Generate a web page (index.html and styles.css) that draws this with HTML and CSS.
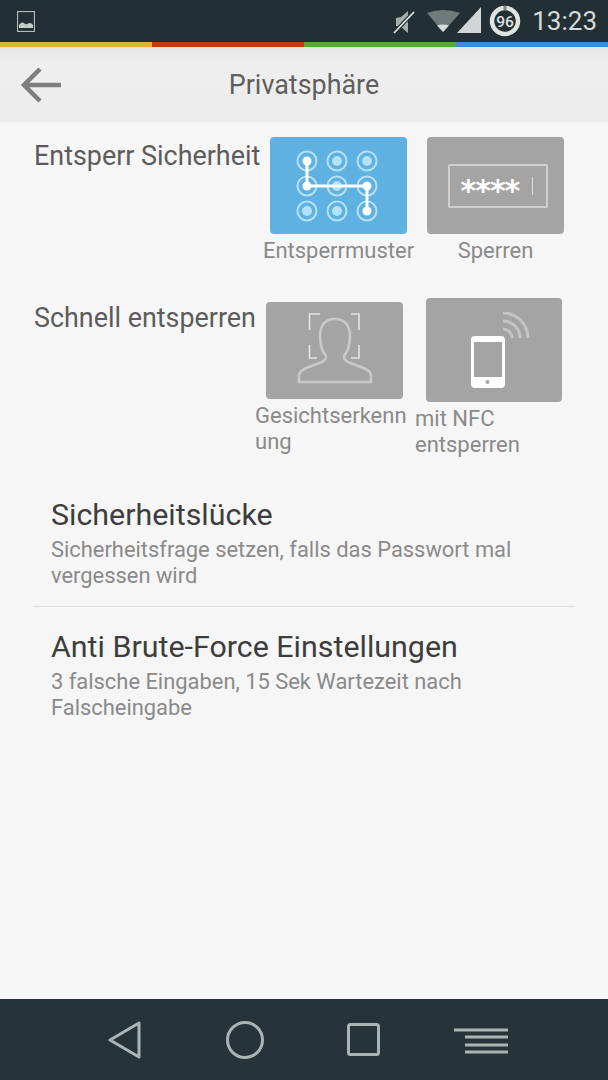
FILE: index.html
```html
<!DOCTYPE html>
<html lang="de">
<head>
    <meta charset="UTF-8">
    <meta name="viewport" content="width=device-width, initial-scale=1.0">
    <title>Privatsphäre</title>
    <link rel="stylesheet" href="styles.css">
</head>
<body>
<div class="phone">

    <div class="status-bar">
        <svg class="pic-icon" width="18" height="21" viewBox="0 0 18 21">
            <rect x="0.500" y="0.500" width="17" height="20" fill="none" stroke="#b3bcbb" stroke-width="1.200"/>
            <path d="M2 17 L2 14 Q5 10 7.500 12.500 Q9 14 11 12.500 Q14 11 16 14 L16 17 Z" fill="#c3cbca"/>
        </svg>
        <div class="status-right">
            <svg class="mute-icon" width="22" height="30" viewBox="0 0 22 30">
                <path d="M3 12 L8 11 L15 5 L15 27 L8 21 L3 20 Z" fill="#a3aead"/>
                <path d="M1 27 L21 6" stroke="#222f35" stroke-width="4"/>
                <path d="M1 27 L21 6" stroke="#e0e4e3" stroke-width="1.800"/>
            </svg>
            <svg class="signal-icon" width="54" height="30" viewBox="0 0 54 30">
                <path d="M0 7 Q16 1 33 7 L16 26 Z" fill="#6f7b7a"/>
                <path d="M10 19.500 Q16 17.500 22 19.500 L16 26 Z" fill="#d5dbda"/>
                <path d="M54 1 L54 27 L30 27 Z" fill="#d0d6d5"/>
            </svg>
            <svg class="battery-icon" width="32" height="32" viewBox="0 0 32 32">
                <circle cx="16" cy="16" r="13" fill="none" stroke="#dfe3e2" stroke-width="4.500"/>
                <path d="M14.500 1 L17.500 1 L17.500 5 L14.500 5 Z" fill="#7d8887"/>
                <text x="16" y="21.500" text-anchor="middle" class="battery-text">96</text>
            </svg>
            <span class="clock">13:23</span>
        </div>
    </div>

    <div class="stripe">
        <div class="stripe-yellow"></div>
        <div class="stripe-red"></div>
        <div class="stripe-green"></div>
        <div class="stripe-blue"></div>
    </div>

    <div class="toolbar">
        <svg class="back-icon" width="40" height="36" viewBox="0 0 40 36">
            <path d="M19 2 L3 18 L19 34 M3 18 L40 18" fill="none" stroke="#7f7f7f" stroke-width="4.500"/>
        </svg>
        <span class="toolbar-title">Privatsphäre</span>
    </div>

    <div class="content">

        <div class="tile-row row-one">
            <div class="row-label">Entsperr Sicherheit</div>
            <div class="tile-col col-pattern">
                <div class="tile tile-blue">
                    <svg width="90" height="74" viewBox="0 0 90 74">
                        <g fill="none" stroke="#b5e1f9" stroke-width="2">
                            <circle cx="13" cy="12" r="9.500"/>
                            <circle cx="43" cy="12" r="9.500"/>
                            <circle cx="73" cy="12" r="9.500"/>
                            <circle cx="13" cy="37" r="9.500"/>
                            <circle cx="43" cy="37" r="9.500"/>
                            <circle cx="73" cy="37" r="9.500"/>
                            <circle cx="13" cy="62" r="9.500"/>
                            <circle cx="43" cy="62" r="9.500"/>
                            <circle cx="73" cy="62" r="9.500"/>
                        </g>
                        <g fill="#b5e1f9">
                            <circle cx="43" cy="12" r="5"/>
                            <circle cx="73" cy="12" r="5"/>
                            <circle cx="43" cy="37" r="5"/>
                            <circle cx="13" cy="62" r="5"/>
                            <circle cx="43" cy="62" r="5"/>
                        </g>
                        <path d="M13 12 L13 37 L73 37 L73 62" fill="none" stroke="#fff" stroke-width="3"/>
                        <g fill="#fff">
                            <circle cx="13" cy="12" r="4.500"/>
                            <circle cx="13" cy="37" r="4.500"/>
                            <circle cx="73" cy="37" r="4.500"/>
                            <circle cx="73" cy="62" r="4.500"/>
                        </g>
                    </svg>
                </div>
                <div class="tile-caption">Entsperrmuster</div>
            </div>
            <div class="tile-col col-lock">
                <div class="tile">
                    <div class="pin-box">
                        <span class="pin-stars">****</span>
                        <span class="pin-cursor"></span>
                    </div>
                </div>
                <div class="tile-caption">Sperren</div>
            </div>
        </div>

        <div class="tile-row row-two">
            <div class="row-label label-short">Schnell entsperren</div>
            <div class="tile-col col-face">
                <div class="tile">
                    <svg width="80" height="76" viewBox="0 0 80 76">
                        <path d="M25 1 L14.500 1 L14.500 17 M56 1 L64 1 L64 17 M14.500 32 L14.500 45 L22 45 M64 32 L64 45 L56 45" fill="none" stroke="#e4e4e4" stroke-width="1.600"/>
                        <path d="M4 69 L4 62 Q5 57 14 54 L27 49 Q31 47 31 43 Q25 36 25 22 Q26 6 40 6 Q54 6 55 22 Q55 36 49 43 Q49 47 53 49 L66 54 Q75 57 76 62 L76 69 Z" fill="none" stroke="#c9c9c9" stroke-width="2.600"/>
                    </svg>
                </div>
                <div class="tile-caption">Gesichtserkenn<br>ung</div>
            </div>
            <div class="tile-col col-nfc">
                <div class="tile tile-tall">
                    <svg width="78" height="76" viewBox="0 0 78 76">
                        <rect x="16" y="24" width="34" height="52" rx="4" fill="#fff"/>
                        <rect x="19" y="30" width="28" height="35" fill="#a4a4a4"/>
                        <circle cx="32.500" cy="70" r="2" fill="#a4a4a4"/>
                        <path d="M48 17 A9 9 0 0 1 57 26 M48 9 A17 17 0 0 1 65 26 M48 1 A25 25 0 0 1 73 26" fill="none" stroke="#c4c4c4" stroke-width="3"/>
                    </svg>
                </div>
                <div class="tile-caption">mit NFC<br>entsperren</div>
            </div>
        </div>

        <div class="setting">
            <div class="setting-title">Sicherheitslücke</div>
            <div class="setting-text">Sicherheitsfrage setzen, falls das Passwort mal vergessen wird</div>
        </div>
        <div class="divider"></div>
        <div class="setting">
            <div class="setting-title">Anti Brute-Force Einstellungen</div>
            <div class="setting-text">3 falsche Eingaben, 15 Sek Wartezeit nach Falscheingabe</div>
        </div>
    </div>

    <div class="nav-bar">
        <svg class="nav-back" width="34" height="38" viewBox="0 0 34 38">
            <path d="M31 2 L31 36 L2 19 Z" fill="none" stroke="#a9b5b4" stroke-width="3" stroke-linejoin="round"/>
        </svg>
        <svg class="nav-home" width="38" height="38" viewBox="0 0 38 38">
            <circle cx="19" cy="19" r="17.500" fill="none" stroke="#a9b5b4" stroke-width="3"/>
        </svg>
        <svg class="nav-recent" width="33" height="33" viewBox="0 0 33 33">
            <rect x="1.500" y="1.500" width="30" height="30" rx="2" fill="none" stroke="#a9b5b4" stroke-width="3"/>
        </svg>
        <svg class="nav-menu" width="54" height="26" viewBox="0 0 54 26">
            <path d="M0 2 L54 2 M11 9 L54 9 M11 17 L54 17 M11 24 L54 24" fill="none" stroke="#a9b5b4" stroke-width="3"/>
        </svg>
    </div>

</div>
</body>
</html>
```

FILE: styles.css
```css
* {
    box-sizing: border-box;
}

body {
    margin: 0;
    padding: 0;
    font-family: Roboto, "Liberation Sans", sans-serif;
    background: #f6f6f6;
}

.phone {
    width: 608px;
    height: 1080px;
    display: flex;
    flex-direction: column;
    overflow: hidden;
}

/* status bar */
.status-bar {
    height: 42px;
    background: #222f35;
    display: flex;
    align-items: center;
    justify-content: space-between;
    padding: 0 11px 0 17px;
}

.pic-icon {
    margin-top: 1px;
}

.status-right {
    display: flex;
    align-items: center;
}

.mute-icon {
    margin-right: 12px;
}

.signal-icon {
    margin-right: 8px;
}

.battery-icon {
    margin-right: 11px;
}

.battery-text {
    font-size: 15.500px;
    font-weight: 500;
    fill: #dfe3e2;
    font-family: Roboto, sans-serif;
}

.clock {
    font-size: 26px;
    color: #d5dbda;
}

.stripe {
    height: 5px;
    display: flex;
}

.stripe div {
    flex: 1;
}

.stripe-yellow {
    background: #dcb23c;
}

.stripe-red {
    background: #bf3a1f;
}

.stripe-green {
    background: #52a648;
}

.stripe-blue {
    background: #3f8bd0;
}

/* toolbar */
.toolbar {
    height: 75px;
    background: linear-gradient(#e6e6e6, #efefef 20%, #ececec);
    display: flex;
    align-items: center;
    justify-content: center;
    position: relative;
}

.back-icon {
    position: absolute;
    left: 21px;
    top: 20px;
}

.toolbar-title {
    font-size: 26.900px;
    color: #5f5f5f;
}

/* content */
.content {
    flex: 1;
    background: #f6f6f6;
    display: flex;
    flex-direction: column;
}

.tile-row {
    display: flex;
}

.row-one {
    height: 160px;
    padding: 15px 0 0 34px;
}

.row-two {
    height: 212px;
    padding: 16px 0 0 34px;
}

.row-label {
    width: 236px;
    font-size: 26.900px;
    line-height: 38px;
    color: #5c5c5c;
    white-space: nowrap;
}

.label-short {
    width: 232px;
    padding-top: 1px;
}

.tile-col {
    display: flex;
    flex-direction: column;
}

.tile {
    width: 137px;
    height: 97px;
    background: #a4a4a4;
    border-radius: 4px;
    display: flex;
    align-items: center;
    justify-content: center;
}

.tile-blue {
    background: #5eb1e0;
}

.tile-tall {
    width: 136px;
    height: 104px;
}

.tile-caption {
    font-size: 22px;
    line-height: 26px;
    color: #8a8a8a;
    white-space: nowrap;
}

.col-pattern {
    width: 137px;
    align-items: center;
}

.col-lock {
    width: 137px;
    margin-left: 20px;
    align-items: center;
}

.col-pattern .tile-caption,
.col-lock .tile-caption {
    margin-top: 4px;
}

.col-face {
    width: 160px;
    margin-top: 4px;
}

.col-face .tile-caption {
    margin: 4px 0 0 -11px;
}

.col-nfc .tile-caption {
    margin: 4px 0 0 -11px;
}

.pin-box {
    width: 100px;
    height: 44px;
    margin-left: 4px;
    border: 2px solid #cfcfcf;
    border-radius: 2px;
    display: flex;
    align-items: center;
    padding-left: 11px;
}

.pin-stars {
    font-family: "DejaVu Sans", sans-serif;
    font-size: 30px;
    font-weight: bold;
    line-height: 30px;
    height: 30px;
    padding-top: 5px;
    color: #fff;
    letter-spacing: -1px;
}

.pin-cursor {
    width: 1px;
    height: 18px;
    background: #dedede;
    margin-left: 13px;
}

/* settings list */
.setting {
    padding: 0 51px;
}

.setting-title {
    font-size: 30.400px;
    line-height: 42px;
    margin-bottom: 1px;
    color: #3d3d3d;
    white-space: nowrap;
}

.setting-text {
    font-size: 21.900px;
    line-height: 26px;
    color: #8a8a8a;
}

.divider {
    height: 1px;
    background: #dcdcdc;
    margin: 17px 33px 19px 33px;
}

/* bottom nav */
.nav-bar {
    height: 81px;
    background: #263338;
    display: flex;
    align-items: center;
    padding-left: 108px;
}

.nav-home {
    margin-left: 84px;
}

.nav-recent {
    margin-left: 83px;
}

.nav-menu {
    margin: 3px 0 0 74px;
}
```
